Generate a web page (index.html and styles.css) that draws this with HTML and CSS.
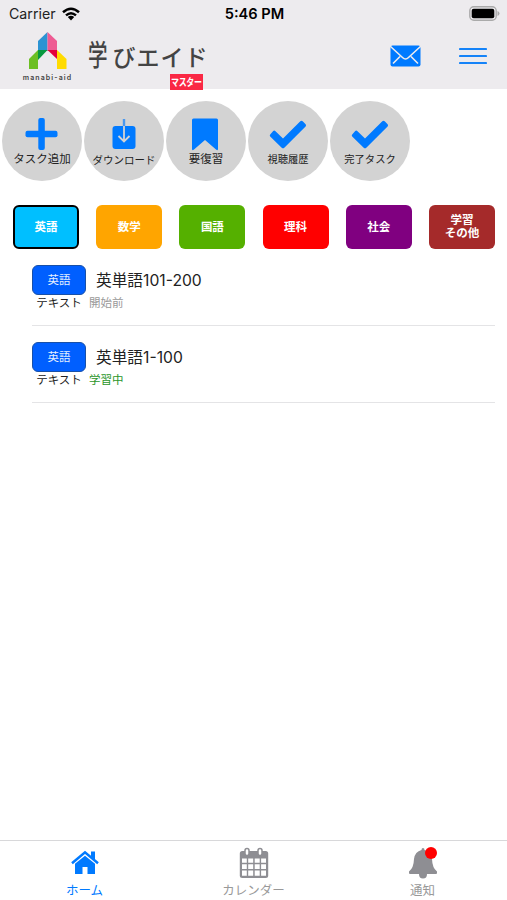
FILE: index.html
```html
<!DOCTYPE html>
<html lang="ja">
<head>
    <meta charset="UTF-8">
    <title>学びエイド マスター</title>
    <link rel="stylesheet" href="styles.css">
</head>
<body>

<header class="header">
    <div class="status">
        <div class="carrier">Carrier
            <svg width="18" height="14" viewBox="0 0 18 14" fill="none" stroke="#000" stroke-width="2.5">
                <path d="M1 5.2Q9-1.8 17 5.2M4 8.4Q9 4 14 8.4"/>
                <path d="M5.8 10Q9 7.4 12.2 10L9 13.4Z" fill="#000" stroke="none"/>
            </svg>
        </div>
        <div class="time">5:46 PM</div>
        <svg class="battery" width="31" height="15" viewBox="0 0 31 15">
            <rect x=".8" y=".8" width="26.4" height="13.4" rx="4" fill="#edebee" stroke="#aaa" stroke-width="1.4"/>
            <rect x="2.7" y="2.7" width="22.6" height="9.6" rx="2" fill="#000"/>
            <path d="M28.5 5q2 .6 2 2.5t-2 2.5z" fill="#aaa"/>
        </svg>
    </div>
    <div class="nav">
        <div class="logo">
            <svg width="40" height="37" viewBox="0 0 40 37">
                <path d="M19.5 0L10 9V19H19.5Z" fill="#2c93d3"/>
                <path d="M19.5 0L29 9V19H19.5Z" fill="#ee5b93"/>
                <path d="M19.5 18L29 18V27Z" fill="#e4003c"/>
                <path d="M10 18V37H1V27Z" fill="#6cbf23"/>
                <path d="M10 18H19.5L10 28Z" fill="#07983f"/>
                <path d="M29 18L38.5 27V37H29Z" fill="#ffdb00"/>
            </svg>
            <span>manabi-aid</span>
        </div>
        <div class="title">
            <svg width="122" height="42" viewBox="0 0 122 42">
                <text class="title-gaku" transform="translate(0 34) scale(.78 1.16)">学</text>
                <text y="33.5" x="24.5 48.5 72.5 96.5">びエイド</text>
            </svg>
            <div class="master">
                <svg width="33" height="16" viewBox="0 0 33 16">
                    <text transform="translate(1 12) scale(.8 1)" x="0 9.6 19.2 28.8">マスター</text>
                </svg>
            </div>
        </div>
        <svg class="mail" width="31" height="22" viewBox="0 0 31 22">
            <rect x=".5" y=".5" width="30" height="21" rx="2" fill="#007aff"/>
            <path d="M0 1L12.5 12.5Q15.5 15.5 18.5 12.5L31 1M3 18.5L10 11.5M28 18.5L21 11.5" fill="none" stroke="#edebee" stroke-width="1.6"/>
        </svg>
        <svg class="menu" width="28" height="18" viewBox="0 0 28 18">
            <path d="M1 2H27M1 9H27M1 16H27" stroke="#1583f8" stroke-width="2.2" stroke-linecap="round"/>
        </svg>
    </div>
</header>

<div class="actions">
    <div class="action add">
        <svg width="34" height="34" viewBox="0 0 34 34">
            <rect x="13.300" y="1" width="6.500" height="32" rx="2" fill="#007aff"/>
            <rect x=".5" y="13.700" width="32" height="6.500" rx="2" fill="#007aff"/>
        </svg>
        <span>タスク追加</span>
    </div>
    <div class="action download">
        <svg width="34" height="34" viewBox="0 0 34 34">
            <rect x="5.5" y="8" width="23" height="23" rx="3" fill="#007aff"/>
            <path d="M17 1V8" stroke="#4a98ee" stroke-width="2.4"/>
            <path d="M17 8V23M11.5 18L17 23.5L22.5 18" fill="none" stroke="#d3d3d3" stroke-width="1.8"/>
        </svg>
        <span>ダウンロード</span>
    </div>
    <div class="action review">
        <svg width="34" height="34" viewBox="0 0 34 34"><path d="M3 3Q3 1.5 4.5 1.5H27.5Q29 1.5 29 3V32Q29 34 27 32.5L16 23L5 32.5Q3 34 3 32Z" fill="#007aff"/></svg>
        <span>要復習</span>
    </div>
    <div class="action history">
        <svg width="38" height="34" viewBox="0 0 38 34"><path d="M1.2 17.5L4 14.2Q5.2 13 6.5 14.2L14 21.6L31.300 4.300Q32.500 3.200 33.700 4.300L36.600 7.200Q37.600 8.300 36.600 9.400L15.300 30.700Q14 31.800 12.700 30.700L1.200 19.500Q.3 18.500 1.200 17.500Z" fill="#007aff"/></svg>
        <span>視聴履歴</span>
    </div>
    <div class="action done">
        <svg width="38" height="34" viewBox="0 0 38 34"><path d="M1.2 17.5L4 14.2Q5.2 13 6.5 14.2L14 21.6L31.300 4.300Q32.500 3.200 33.700 4.300L36.600 7.200Q37.600 8.300 36.600 9.400L15.300 30.700Q14 31.800 12.700 30.700L1.200 19.500Q.3 18.500 1.200 17.500Z" fill="#007aff"/></svg>
        <span>完了タスク</span>
    </div>
</div>

<div class="subjects">
    <div class="subject english">英語</div>
    <div class="subject math">数学</div>
    <div class="subject japanese">国語</div>
    <div class="subject science">理科</div>
    <div class="subject social">社会</div>
    <div class="subject other">学習<br>その他</div>
</div>

<main class="tasks">
    <div class="task">
        <div class="task-kind"><div class="label">英語</div><span>テキスト</span></div>
        <div class="task-info"><div class="task-name">英単語101-200</div><span class="waiting">開始前</span></div>
    </div>
    <div class="task">
        <div class="task-kind"><div class="label">英語</div><span>テキスト</span></div>
        <div class="task-info"><div class="task-name">英単語1-100</div><span class="learning">学習中</span></div>
    </div>
</main>

<footer class="tabbar">
    <div class="tab active">
        <svg width="32" height="32" viewBox="0 0 32 32">
            <path d="M3 16.2L16 5.3L29 16.2" fill="none" stroke="#007aff" stroke-width="2.5"/>
            <path d="M22 4.5H26V13L22 9.5ZM6 16.7L16 8.7L26 16.7V27H18.5V20H13.5V27H6Z" fill="#007aff"/>
        </svg>
        <span>ホーム</span>
    </div>
    <div class="tab">
        <svg width="32" height="32" viewBox="0 0 32 32">
            <rect x="1.8" y="4" width="28.4" height="27" rx="2.5" fill="#8e8e93"/>
            <path d="M4 11.5H8.8V15.8H4ZM10.2 11.5H15.2V15.8H10.2ZM16.7 11.5H21.7V15.8H16.7ZM23.1 11.5H28V15.8H23.1ZM4 17.3H8.8V22H4ZM10.2 17.3H15.2V22H10.2ZM16.7 17.3H21.7V22H16.7ZM23.1 17.3H28V22H23.1ZM4 23.5H8.8V28.8H4ZM10.2 23.5H15.2V28.8H10.2ZM16.7 23.5H21.7V28.8H16.7ZM23.1 23.5H28V28.8H23.1Z" fill="#fff"/>
            <rect x="7" y="1.5" width="4" height="7" rx="2" fill="#fff" stroke="#8e8e93" stroke-width="1.5"/>
            <rect x="20" y="1.5" width="4" height="7" rx="2" fill="#fff" stroke="#8e8e93" stroke-width="1.5"/>
        </svg>
        <span>カレンダー</span>
    </div>
    <div class="tab">
        <div class="bell">
            <svg width="32" height="32" viewBox="0 0 32 32">
                <path d="M14.5 3Q14.5 1 16 1T17.5 3Q24 4.5 25 12Q25.3 21 30 24.5Q30.5 27 29 27H3Q1.5 27 2 24.5Q6.7 21 7 12Q8 4.5 14.5 3ZM12 27H20Q20 31.5 16 31.5T12 27Z" fill="#8e8e93"/>
            </svg>
            <i class="dot"></i>
        </div>
        <span>通知</span>
    </div>
</footer>

</body>
</html>
```

FILE: styles.css
```css
* {
    box-sizing: border-box;
}
body {
    font-family: Inter, "Noto Sans CJK JP", sans-serif;
    background-color: #fff;
    margin: 0;
    height: 900px;
    display: flex;
    flex-direction: column;
    color: #222;
}
svg {
    display: block;
    flex: none;
}
.header {
    height: 89px;
    flex: none;
    background: #edebee;
}
.status {
    height: 27px;
    padding: 0 7px 0 9px;
    display: grid;
    grid-template-columns: 1fr auto 1fr;
    align-items: center;
    font-size: 14.2px;
}
.carrier {
    display: flex;
    align-items: center;
    gap: 6px;
}
.time {
    font-size: 14.6px;
    font-weight: 600;
    color: #000;
}
.battery {
    justify-self: end;
}
.nav {
    display: flex;
    padding: 5px 20px 0 22px;
}
.logo {
    width: 51px;
    display: flex;
    flex-direction: column;
    align-items: center;
    font-size: 7px;
    font-weight: 600;
    line-height: 8px;
    letter-spacing: 1.1px;
    color: #444;
    gap: 5px;
}
.logo span {
    white-space: nowrap;
}
.title {
    position: relative;
    width: 122px;
    height: 58px;
    margin-left: 15px;
}
.title text {
    font-family: "Noto Sans CJK JP", sans-serif;
    font-size: 23px;
    font-weight: 500;
    fill: #444;
}
.title .title-gaku {
    font-size: 25px;
}
.master {
    position: absolute;
    left: 82px;
    top: 42px;
    width: 33px;
    height: 16px;
    background: #fa2844;
}
.title .master text {
    font-size: 10px;
    font-weight: 700;
    fill: #fff;
}
.mail {
    margin: 13px 0 0 auto;
}
.menu {
    margin: 15px 0 0 38px;
}
.actions {
    display: flex;
    gap: 2px;
    padding: 12px 2px 0;
}
.action {
    width: 80px;
    height: 80px;
    border-radius: 50%;
    background: #d3d3d3;
    display: flex;
    flex-direction: column;
    align-items: center;
    padding-top: 16px;
    font-size: 11.5px;
    line-height: 16px;
    white-space: nowrap;
}
.download {
    padding-top: 17px;
    font-size: 10.5px;
}
.download span {
    padding-top: 1px;
}
.history, .done {
    font-size: 10.3px;
}
.subjects {
    display: flex;
    justify-content: space-between;
    padding: 24px 12px 0 13px;
}
.subject {
    width: 66px;
    height: 44px;
    border-radius: 6px;
    color: #fff;
    font-size: 11.5px;
    font-weight: 700;
    line-height: 13px;
    display: flex;
    align-items: center;
    justify-content: center;
    text-align: center;
}
.english {
    background: #00bfff;
    border: 2px solid #000;
}
.math {
    background: #ffa500;
}
.japanese {
    background: #55b000;
}
.science {
    background: #ff0000;
}
.social {
    background: #800080;
}
.other {
    background: #a52a2a;
}
.tasks {
    flex: 1;
    padding: 0 12px 0 32px;
}
.task {
    height: 77px;
    padding-top: 16px;
    display: flex;
    gap: 3px;
    border-bottom: 1px solid #e4e4e6;
}
.task-kind {
    width: 54px;
    font-size: 11.5px;
    line-height: 17px;
    text-align: center;
}
.label {
    height: 30px;
    border: 1px solid #1850a8;
    border-radius: 6px;
    background: #005fff;
    color: #e4efff;
    line-height: 28px;
}
.task-info {
    font-size: 11.5px;
    line-height: 17px;
}
.task-name {
    height: 30px;
    padding-left: 7px;
    font-size: 15.7px;
    line-height: 31px;
}
.waiting {
    color: #999;
}
.learning {
    color: #2a962a;
}
.tabbar {
    height: 60px;
    flex: none;
    border-top: 1px solid #d8d8da;
    display: grid;
    grid-template-columns: repeat(3, 1fr);
}
.tab {
    display: flex;
    flex-direction: column;
    align-items: center;
    padding-top: 6px;
    gap: 3px;
    font-size: 12.5px;
    line-height: 17px;
    color: #999;
}
.active {
    color: #007aff;
}
.bell {
    position: relative;
}
.dot {
    position: absolute;
    left: 18px;
    top: 0;
    width: 12px;
    height: 12px;
    border-radius: 50%;
    background: #ff0000;
}
```
